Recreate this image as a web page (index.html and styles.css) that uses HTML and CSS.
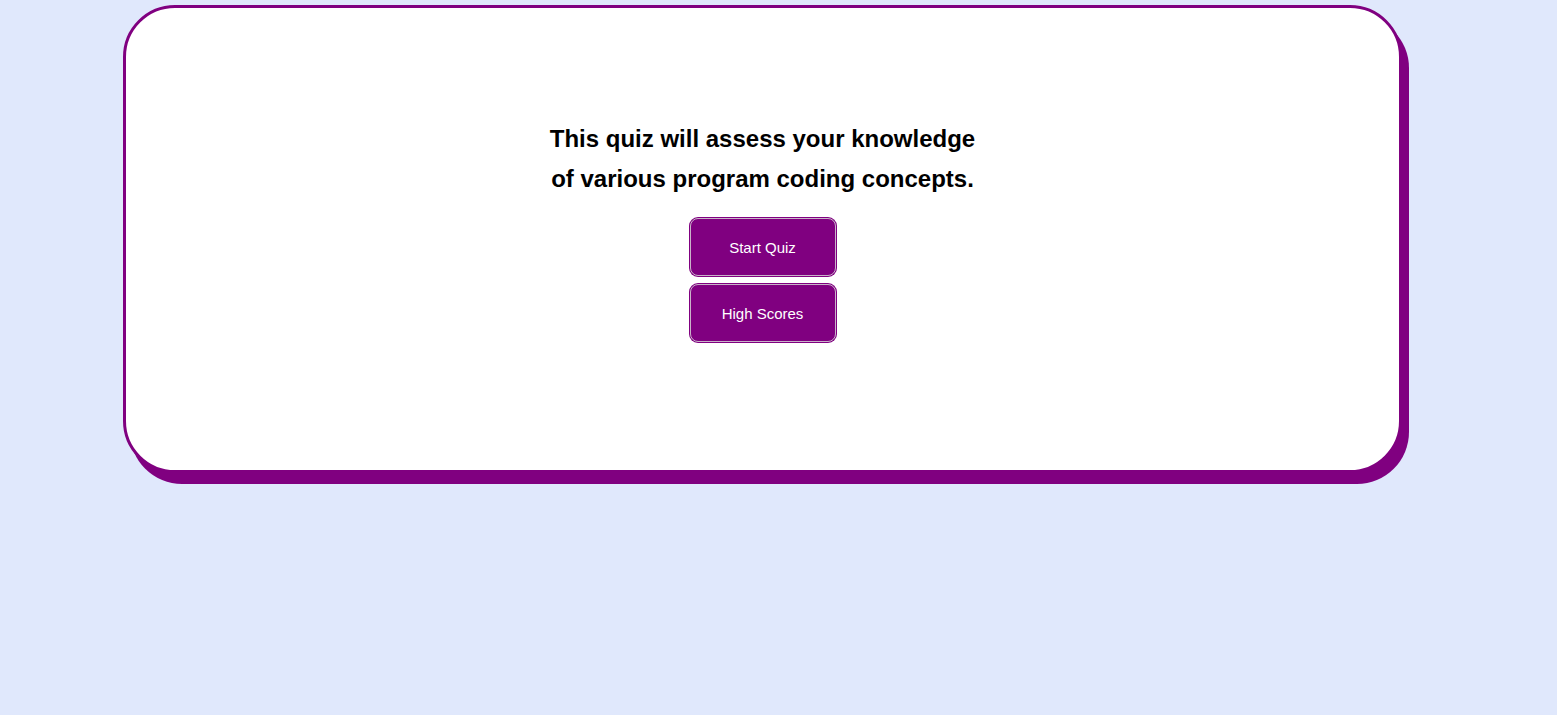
FILE: index.html
```html
<!DOCTYPE html>
<html lang="en">
<head>
<meta charset="utf-8">
<title>Code Quiz</title>
<link rel="stylesheet" href="styles.css">
</head>
<body>
<main class="card">
  <h1 class="intro">This quiz will assess your knowledge of various program coding concepts.</h1>
  <div class="actions">
    <button class="btn">Start Quiz</button>
    <button class="btn">High Scores</button>
  </div>
</main>
</body>
</html>
```

FILE: styles.css
```css
html, body {
  margin: 0;
  padding: 0;
}
body {
  background: #e0e8fc;
  font-family: "Liberation Sans", Arial, sans-serif;
  padding: 5px 0 0 123px;
  min-height: 715px;
  box-sizing: border-box;
}
.card {
  box-sizing: border-box;
  width: 1279px;
  height: 468px;
  background: #ffffff;
  border: 3px solid #800080;
  border-radius: 52px;
  box-shadow: 7px 11px 0 #800080;
  padding-top: 111px;
  display: flex;
  flex-direction: column;
  align-items: center;
}
.intro {
  margin: 0;
  max-width: 440px;
  text-align: center;
  font-size: 24px;
  line-height: 40px;
  font-weight: bold;
  color: #000;
}
.actions {
  margin-top: 19px;
  display: flex;
  flex-direction: column;
  gap: 8px;
}
.btn {
  width: 146px;
  height: 58px;
  background: #800080;
  color: #fff;
  font-family: "Liberation Sans", Arial, sans-serif;
  font-size: 15px;
  border: 1px solid #c9b3c9;
  box-shadow: 0 0 0 1px #800080;
  border-radius: 8px;
  padding: 0;
  cursor: pointer;
}
```
